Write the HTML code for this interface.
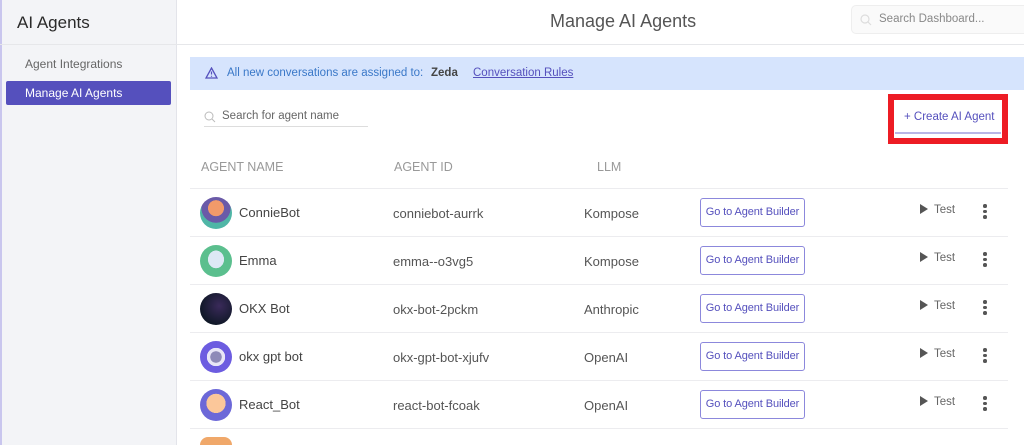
<!DOCTYPE html>
<html style="width:1024px;height:445px;overflow:hidden"><head><meta charset="utf-8"><style>
*{box-sizing:border-box;margin:0;padding:0}
body{width:1024px;height:445px;overflow:hidden;font-family:"Liberation Sans",sans-serif;background:#fff;position:relative;color:#444}
.abs{position:absolute}
.side{left:0;top:0;width:177px;height:445px;background:#f3f4f7;border-right:1px solid #e3e4ea;border-left:2px solid #c9c6ee}
.row{left:190px;width:818px;height:48px;border-top:1px solid #ececef;overflow:hidden}
.av{position:absolute;left:10px;top:8px;width:32px;height:32px;border-radius:50%}
.nm{position:absolute;left:49px;top:16px;font-size:13px;color:#444}
.id{position:absolute;left:203px;top:17px;font-size:13px;color:#555}
.llm{position:absolute;left:394px;top:17px;font-size:13px;color:#555}
.btn{position:absolute;left:510px;top:9px;width:105px;height:29px;border:1px solid #8c88dc;border-radius:3px;font-size:11px;color:#5550bd;text-align:center;line-height:27px;letter-spacing:-0.1px}
.test{position:absolute;left:730px;top:15px;font-size:11.5px;color:#666}
.test:before{content:"";display:inline-block;border-left:8px solid #555;border-top:5px solid transparent;border-bottom:5px solid transparent;margin-right:6px;vertical-align:-1px}
.dots{position:absolute;left:793px;top:15px;width:4px}
.dots i{display:block;width:3.5px;height:3.5px;background:#555;border-radius:50%;margin-bottom:2px}
</style></head><body>
<div class="abs side"></div>
<div class="abs" style="left:17px;top:13px;font-size:17px;color:#2a2a2a">AI Agents</div>
<div class="abs" style="left:0;top:44px;width:1024px;border-top:1px solid #e6e7ea"></div>
<div class="abs" style="left:25px;top:57px;font-size:12px;color:#666">Agent Integrations</div>
<div class="abs" style="left:6px;top:81px;width:165px;height:24px;background:#5550bd;border-radius:2px;color:#fff;font-size:12px;padding:5px 0 0 19px">Manage AI Agents</div>
<div class="abs" style="left:550px;top:11px;font-size:18px;color:#555">Manage AI Agents</div>
<div class="abs" style="left:851px;top:5px;width:173px;height:29px;border:1px solid #eee;border-right:none;border-radius:5px 0 0 5px;background:#fafafa;font-size:11.5px;color:#888;padding:7px 0 0 27px;white-space:nowrap;overflow:hidden">Search Dashboard...
<svg class="abs" style="left:8px;top:8px" width="12" height="12" viewBox="0 0 12 12"><circle cx="5" cy="5" r="4" fill="none" stroke="#ddd" stroke-width="1.2"/><path d="M8 8l3 3" stroke="#ddd" stroke-width="1.2"/></svg></div>
<div class="abs" style="left:190px;top:57px;width:834px;height:33px;background:#d6e4fd"></div>
<svg class="abs" style="left:205px;top:67px" width="13" height="12" viewBox="0 0 13 12"><path d="M6.5 1L12 11H1z" fill="none" stroke="#5550bd" stroke-width="1.3"/><path d="M6.5 4.5v3M6.5 8.7v1" stroke="#5550bd" stroke-width="1.2"/></svg>
<div class="abs" style="left:227px;top:67px;font-size:11.5px;color:#3a78c8">All new conversations are assigned to:</div>
<div class="abs" style="left:431px;top:67px;font-size:11.5px;color:#444;font-weight:bold">Zeda</div>
<div class="abs" style="left:473px;top:67px;font-size:11.5px;color:#5550bd;text-decoration:underline">Conversation Rules</div>
<svg class="abs" style="left:204px;top:111px" width="12" height="12" viewBox="0 0 12 12"><circle cx="5" cy="5" r="4" fill="none" stroke="#bbb" stroke-width="1"/><path d="M8 8l3 3" stroke="#bbb"/></svg>
<div class="abs" style="left:222px;top:110px;font-size:11.5px;color:#666">Search for agent name</div>
<div class="abs" style="left:204px;top:126px;width:164px;border-top:1px solid #ddd"></div>
<div class="abs" style="left:888px;top:94px;width:120px;height:50px;border:6px solid #ed1c24"></div>
<div class="abs" style="left:895px;top:102px;width:106px;height:32px;border-bottom:2px solid #b9b6e6;font-size:11.5px;color:#5550bd;padding:9px 0 0 9px">+ Create AI Agent</div>
<div class="abs" style="left:201px;top:160px;font-size:12.5px;color:#999">AGENT NAME</div>
<div class="abs" style="left:394px;top:160px;font-size:12.5px;color:#999">AGENT ID</div>
<div class="abs" style="left:597px;top:160px;font-size:12.5px;color:#999">LLM</div>
<div class="abs row" style="top:188px"><div class="av" style="background:radial-gradient(circle at 50% 35%,#f29a6a 0 30%,#6a5aa8 31% 55%,#4fb6a6 56%)"></div><div class="nm">ConnieBot</div><div class="id">conniebot-aurrk</div><div class="llm">Kompose</div><div class="btn">Go to Agent Builder</div><div class="test">Test</div><div class="dots"><i></i><i></i><i></i></div></div>
<div class="abs row" style="top:236px"><div class="av" style="background:radial-gradient(ellipse at 50% 45%,#dde8f5 0 35%,#5bbf8e 36%)"></div><div class="nm">Emma</div><div class="id">emma--o3vg5</div><div class="llm">Kompose</div><div class="btn">Go to Agent Builder</div><div class="test">Test</div><div class="dots"><i></i><i></i><i></i></div></div>
<div class="abs row" style="top:284px"><div class="av" style="background:radial-gradient(circle at 60% 40%,#3a2a5a,#101828 70%)"></div><div class="nm">OKX Bot</div><div class="id">okx-bot-2pckm</div><div class="llm">Anthropic</div><div class="btn">Go to Agent Builder</div><div class="test">Test</div><div class="dots"><i></i><i></i><i></i></div></div>
<div class="abs row" style="top:332px"><div class="av" style="background:radial-gradient(ellipse at 50% 50%,#8e8ab8 0 25%,#e8e6f6 26% 40%,#6c5ce0 41%)"></div><div class="nm">okx gpt bot</div><div class="id">okx-gpt-bot-xjufv</div><div class="llm">OpenAI</div><div class="btn">Go to Agent Builder</div><div class="test">Test</div><div class="dots"><i></i><i></i><i></i></div></div>
<div class="abs row" style="top:380px"><div class="av" style="background:radial-gradient(circle at 50% 45%,#fbc79a 0 40%,#6c68d8 41%)"></div><div class="nm">React_Bot</div><div class="id">react-bot-fcoak</div><div class="llm">OpenAI</div><div class="btn">Go to Agent Builder</div><div class="test">Test</div><div class="dots"><i></i><i></i><i></i></div></div>
<div class="abs" style="left:190px;top:428px;width:818px;border-top:1px solid #ececef"></div>
<div class="abs" style="left:200px;top:437px;width:32px;height:8px;border-radius:16px 16px 0 0;background:#f0a86a"></div>
</body></html>
